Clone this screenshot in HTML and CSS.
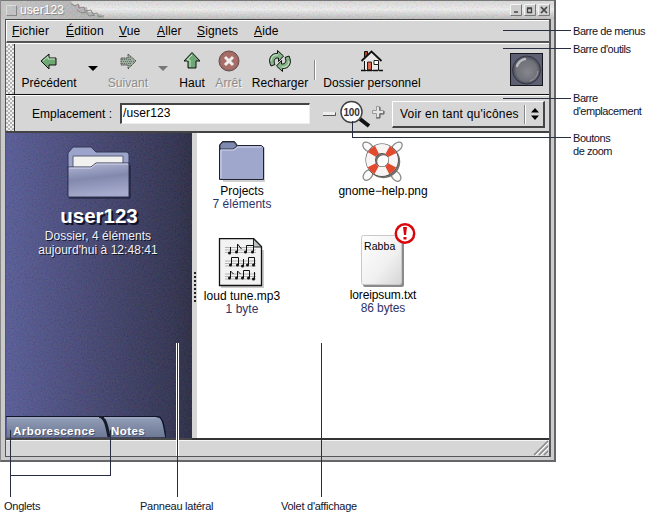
FILE: index.html
```html
<!DOCTYPE html>
<html lang="fr">
<head>
<meta charset="utf-8">
<title>user123</title>
<link rel="stylesheet" href="styles.css">
</head>
<body>
<main class="figure">
  <section class="window">
    <header class="titlebar">
      <svg class="stone" width="556" height="19" aria-hidden="true">
        <defs>
          <filter id="grain" x="0" y="0" width="100%" height="100%"><feTurbulence type="fractalNoise" baseFrequency=".65" numOctaves="2" seed="4"/><feColorMatrix values="1.6 0 0 0 -.2  0 1.6 0 0 -.2  0 0 1.6 0 -.2  0 0 0 0 1"/></filter>
          <linearGradient id="bar" x2="0" y2="1"><stop stop-color="#d8d8d8"/><stop offset=".45" stop-color="#f0f0f0"/><stop offset="1" stop-color="#b2b2b2"/></linearGradient>
          <linearGradient id="barDark" x2="1" y2="0"><stop stop-color="#c4c4c4"/><stop offset="1" stop-color="#acacac"/></linearGradient>
        </defs>
        <rect width="556" height="19" fill="url(#bar)"/>
        <path d="M0 0H70l3 4 5-1 2 4 6-1 1 5 5 0 2 3 6-1 3 3v3H0z" fill="url(#barDark)"/>
        <path d="M70 3l4 2 3-2 1 4 5-1 1 4 6-1 2 4 4-1 2 4 5-1M76 9l5 3 4-1 3 4 6-1" fill="none" stroke="#7c7c7c"/>
        <rect width="556" height="19" filter="url(#grain)" opacity=".17"/>
      </svg>
      <span class="winicon"></span>
      <span class="title">user123</span>
      <span class="winbtns">
        <svg width="12" height="12"><path d="M.5 11.5V.5h11" class="hi"/><path d="M.5 11.5h11V.5" class="lo"/><path d="M4 8h4" stroke="#444" stroke-width="1.5"/></svg>
        <svg width="12" height="12"><path d="M.5 11.5V.5h11" class="hi"/><path d="M.5 11.5h11V.5" class="lo"/><path d="M3.500 4.500v4h4v-4zM3 4h5" fill="none" stroke="#444" stroke-width="1.300"/></svg>
        <svg width="12" height="12"><path d="M.5 11.5V.5h11" class="hi"/><path d="M.5 11.5h11V.5" class="lo"/><path d="M3 3l6 6M9 3L3 9" stroke="#444" stroke-width="1.700"/></svg>
      </span>
    </header>
    <div class="body">
      <nav class="menubar">
        <span class="m1"><u>F</u>ichier</span><span class="m2"><u>É</u>dition</span><span class="m3"><u>V</u>ue</span><span class="m4"><u>A</u>ller</span><span class="m5"><u>S</u>ignets</span><span class="m6"><u>A</u>ide</span>
      </nav>
      <div class="toolbar">
        <span class="grip"></span>
        <div class="tool">
          <svg width="24" height="24"><path d="M4 12l8-7v4h7v7h-7v4z" fill="#6fa777" stroke="#111"/><path d="M6 12l5-4.500V10h7" fill="none" stroke="#c5e8c2"/></svg>
          <span>Précédent</span></div>
        <svg class="drop" width="10" height="6"><path d="M0 0h10L5 5z"/></svg>
        <div class="tool off">
          <svg width="24" height="24"><path d="M20 12l-8-7v4H5v7h7v4z" fill="#9cae9d" stroke="#444" stroke-dasharray="1.500 .7"/><path d="M6 10.500h9M7 12.500h11M6 14.500h9M14 8v9" stroke="#667067" stroke-dasharray="1 1"/></svg>
          <span>Suivant</span></div>
        <svg class="drop" width="10" height="6"><path d="M0 0h10L5 5z" fill="#777"/></svg>
        <div class="tool">
          <svg width="24" height="24"><path d="M12 3.500l8 8.500h-4v7H8v-7H4z" fill="#6fa777" stroke="#111"/><path d="M10 18v-7H7l5-5" fill="none" stroke="#c5e8c2"/></svg>
          <span>Haut</span></div>
        <div class="tool off">
          <svg width="24" height="24"><circle cx="12" cy="12" r="10" fill="#a96d68" stroke="#6c4a48"/><circle cx="12" cy="12" r="9" fill="none" stroke="#6d6260" stroke-dasharray="1 1"/><path d="M8 8l8 8M16 8l-8 8" stroke="#eee" stroke-width="3"/></svg>
          <span>Arrêt</span></div>
        <div class="tool">
          <svg width="24" height="24"><g fill="#86b58a" stroke="#111"><path d="M3 17C-.5 10 3 4 9.500 4.500V1.500l6 5.500-5 5.500V9C6.500 8.500 5 12 7 15.500z"/><path d="M21 7c3.500 7 0 13-6.500 12.500v3L8.500 17l5-5.500V15c4 .5 5.500-3 3.500-6.500z"/></g><path d="M3 12c0-4 3-7 7-6M21 12c0 4-3 7-7 6" fill="none" stroke="#d3edcf"/></svg>
          <span>Recharger</span></div>
        <span class="sep"></span>
        <div class="tool">
          <svg width="24" height="24"><path d="M4.500 11h14v10.500h-14z" fill="#ececec" stroke="#111"/><path d="M4.500 8V2.500h3V6" fill="#b53f2b" stroke="#111"/><path d="M1.500 12L11.500 2.500l10 9.500" fill="#e8e8e8" stroke="#111" stroke-width="1.800"/><path d="M7.500 21v-8h4v8z" fill="#d96850" stroke="#222"/><path d="M14 11.500h4.500v4H14z" fill="#fff" stroke="#222"/><path d="M1 21.500h22" stroke="#111" stroke-width="1.500" stroke-dasharray="5 1"/></svg>
          <span>Dossier personnel</span></div>
        <svg class="throbber" width="33" height="33">
          <defs><radialGradient id="orb" cx=".5" cy=".5" r=".5" fx=".55" fy=".6"><stop stop-color="#85868e"/><stop offset=".75" stop-color="#6f7179"/><stop offset="1" stop-color="#454854"/></radialGradient></defs>
          <rect x=".5" y=".5" width="32" height="32" fill="#5d6073" stroke="#16171c"/><circle cx="16.500" cy="17" r="14" fill="url(#orb)" stroke="#353846"/><path d="M7 13a11 11 0 0 1 8-7" fill="none" stroke="#b9bac0" stroke-width="2.500" stroke-linecap="round"/><path d="M20 28a12 12 0 0 0 8-10" fill="none" stroke="#9899a0"/></svg>
      </div>
      <div class="location">
        <span class="grip"></span>
        <span class="loclabel">Emplacement :</span>
        <span class="field">/user123</span>
        <svg class="zoomer" width="66" height="30">
          <path d="M1 12h12v3.500H1z" fill="#eee"/><path d="M1 15.500h12.500v-3" stroke="#555" fill="none"/>
          <path d="M38 19l9 7" stroke="#111" stroke-width="4"/><circle cx="29.500" cy="12" r="10.500" fill="#fff" stroke="#444" stroke-width="1.500"/><text x="29.500" y="16" text-anchor="middle">100</text>
          <path d="M54.500 6.500h3v4h4v3h-4v4h-3v-4h-4v-3h4z" fill="#e6e6e6" stroke="#999"/><path d="M58 7v3.500M62 11v3h-4v4h-4" fill="none" stroke="#555"/></svg>
        <span class="view"><span>Voir en tant qu'icônes</span><svg width="10" height="14"><path d="M1 5.500h8L5 1zM1 8.500h8L5 13z"/></svg></span>
      </div>
      <div class="content">
        <aside class="sidebar">
          <svg class="dither" width="186" height="307" aria-hidden="true"><rect width="186" height="307" filter="url(#grain)"/></svg>
          <svg class="bigfolder" width="66" height="54">
            <defs><linearGradient id="fold" x2=".2" y2="1"><stop stop-color="#b5b9d8"/><stop offset=".5" stop-color="#8289ad"/><stop offset="1" stop-color="#a6abcd"/></linearGradient></defs>
            <path d="M2 51V8l5-6h18l5 5h31l2 2v42z" fill="#9ca4cb" stroke="#333754"/><path d="M7 11h50v14H7z" fill="#f1f1ef" stroke="#5b5f73"/><path d="M2 22h23l5-4h33v34H2z" fill="url(#fold)" stroke="#303552"/><path d="M3 23h22l5-4h32" fill="none" stroke="#d5d8eb"/><path d="M3 53h61V20" fill="none" stroke="#171a2e"/></svg>
          <h1>user123</h1>
          <p>Dossier, 4 éléments</p><p class="date">aujourd'hui à 12:48:41</p>
          <div class="tabs">
            <svg width="160" height="22" aria-hidden="true"><defs><linearGradient id="tab" x2="0" y2="1"><stop stop-color="#939eb8"/><stop offset="1" stop-color="#6d7995"/></linearGradient></defs>
              <path d="M1 21V1h150c7 0 7 12 9 20z" fill="url(#tab)"/><path d="M0 .5h151c7 0 7 13 9 21" fill="none" stroke="#11152b" stroke-width="1.500"/><path d="M93 0c7 1 8 12 10 21" fill="none" stroke="#171b2b" stroke-width="3"/><path d="M1 1.800h92M98 1.800h52" stroke="#b1bace"/></svg>
            <b class="tab1">Arborescence</b><b class="tab2">Notes</b>
          </div>
        </aside>
        <div class="splitter"></div>
        <div class="files">
          <div class="file">
            <svg width="50" height="42"><path d="M4 5h42l2 2v34H6" fill="#d0cfd1"/><path d="M2.500 38.500V4l3-3.500h12l3 4h24l2 2v32z" fill="#a0a7cd" stroke="#20222d"/><path d="M3 8h13l4-3-3-4H6L3 4z" fill="#7f8ab0" stroke="#303442"/><path d="M4 37V9h13l4-3h23" fill="none" stroke="#d1d5ea"/></svg>
            <span>Projects</span><em>7 éléments</em></div>
          <div class="file help">
            <svg width="50" height="42"><g fill="#fafafa" stroke="#8d8a84" stroke-width="1.300"><ellipse cx="10" cy="6" rx="6" ry="3.800" transform="rotate(40 10 6)"/><ellipse cx="39" cy="6" rx="6" ry="3.800" transform="rotate(-40 39 6)"/><ellipse cx="10" cy="34" rx="6" ry="4" transform="rotate(-50 10 34)"/><ellipse cx="38" cy="35" rx="6" ry="4" transform="rotate(50 38 35)"/></g><circle cx="25.500" cy="20.500" r="11.500" fill="none" stroke="#77716d" stroke-width="10.500"/><circle cx="24" cy="19" r="11.500" fill="none" stroke="#444" stroke-width="10"/><circle cx="24" cy="19" r="11.500" fill="none" stroke="#f6f5f4" stroke-width="9"/><circle cx="24" cy="19" r="11.500" fill="none" stroke="#e14a2e" stroke-width="9" stroke-dasharray="7 11.064" stroke-dashoffset="-5.500"/></svg>
            <span>gnome−help.png</span></div>
          <div class="file">
            <svg width="50" height="50"><path d="M4 49h42V12" fill="none" stroke="#ccc" stroke-width="2"/><path d="M2.500.5h34l8 8v39h-42z" fill="#f2f2f2" stroke="#111" stroke-width="1.300"/><path d="M36.500 1v8h8z" fill="#bcc5bd" stroke="#222"/>
              <g stroke="#999" stroke-width=".7"><path d="M8 9.500h31M8 12h31M8 14.500h31M8 23h31M8 25.500h31M8 28h31M8 36h31M8 38.500h31M8 41h31"/></g>
              <g fill="none" stroke="#111"><path d="M13.500 15V9M20.500 14V6l4 5M29.500 14V7.500h7V14M14.500 27v-7.500h7V27M26.500 28v-7M31.500 27v-7.500h6V27M13.500 40v-7l3 3M20.500 40v-7l3 3M26.500 40v-7.500h6V40M37.500 41v-7"/></g>
              <g fill="#111"><circle cx="12.500" cy="15" r="1.500"/><circle cx="19.500" cy="14" r="1.500"/><circle cx="28.500" cy="14" r="1.500"/><circle cx="35.500" cy="14" r="1.500"/><circle cx="13.500" cy="27" r="1.500"/><circle cx="20.500" cy="27" r="1.500"/><circle cx="25.500" cy="28" r="1.500"/><circle cx="30.500" cy="27" r="1.500"/><circle cx="36.500" cy="27" r="1.500"/><circle cx="12.500" cy="40" r="1.500"/><circle cx="19.500" cy="40" r="1.500"/><circle cx="25.500" cy="40" r="1.500"/><circle cx="31.500" cy="40" r="1.500"/><circle cx="36.500" cy="41" r="1.500"/></g></svg>
            <span>loud tune.mp3</span><em>1 byte</em></div>
          <div class="file doc">
            <svg width="70" height="66"><defs><linearGradient id="paper" x2="1" y2="1"><stop stop-color="#fff"/><stop offset=".6" stop-color="#f0f0f0"/><stop offset="1" stop-color="#d5d5d5"/></linearGradient></defs><rect x="15" y="14" width="41" height="50" rx="2" fill="#8b8b8b"/><rect x="13.500" y="12.500" width="40" height="49" rx="2" fill="url(#paper)" stroke="#c9c9c9"/><text x="16" y="26.500">Rabba</text><circle cx="57" cy="10.500" r="9.200" fill="#fff" stroke="#d9070b" stroke-width="2.500"/><path d="M55 4h4l-1 8h-2zM55.500 14h3v2.500h-3z" fill="#d9070b"/></svg>
            <span>loreipsum.txt</span><em>86 bytes</em></div>
        </div>
      </div>
      <footer class="status"><svg width="16" height="16"><path d="M1 15L15 1M6 15l9-9M11 15l4-4" stroke="#888" stroke-width="1.500"/><path d="M2.500 15.500l13-13M7.500 15.500l8-8" stroke="#fff"/></svg></footer>
    </div>
  </section>
  <aside class="labels">
    <p>Barre de menus</p><p>Barre d'outils</p><p>Barre<br>d'emplacement</p><p>Boutons<br>de zoom</p>
  </aside>
  <div class="captions"><span class="c1">Onglets</span><span class="c2">Panneau latéral</span><span class="c3">Volet d'affichage</span></div>
  <svg class="leaders" width="648" height="522" aria-hidden="true">
    <path d="M176.500 343v113M178.500 343v113" stroke="#fff"/>
    <path d="M503 30.500h68M503 48.500h68M503 98.500h68M352.500 121v17M352 137.500h219M10.500 430v67M110.500 430v46M10 475.500h101M177.500 343v154M321.500 343v154"/>
  </svg>
</main>
</body>
</html>
```
FILE: styles.css
```css
* { box-sizing: border-box; }
body { margin: 0; background: #fff; font: 12px/14px "Liberation Sans", sans-serif; color: #000; }
p, h1 { margin: 0; }
svg { display: block; flex: none; }
.figure { position: relative; width: 648px; height: 522px; display: grid; grid-template-columns: 556px 92px; grid-template-rows: 462px 60px; overflow: hidden; }
.window { display: flex; flex-direction: column; background: #cbcbcb; border-right: 2px solid #66666a; border-bottom: 2px solid #66666a; border-left: 1px solid #888; }
.titlebar { position: relative; height: 19px; flex: none; display: flex; align-items: center; padding: 0 4px 0 5px; border-top: 1px solid #777; }
.stone { position: absolute; left: 0; top: 0; width: 553px; height: 18px; }
.winicon { position: relative; width: 11px; height: 11px; border: 1px solid #888; border-top-color: #ddd; border-left-color: #ddd; }
.title { position: relative; margin-left: 3px; color: #fff; letter-spacing: .1px; text-shadow: 1px 1px #8d8d8d; }
.winbtns { position: relative; margin-left: auto; display: flex; gap: 2px; }
.winbtns svg { background: #cecece; }
.hi { stroke: #f5f5f5; fill: none; }
.lo { stroke: #777; fill: none; }
.body { flex: 1; display: flex; flex-direction: column; margin: 0 3px 3px 4px; border: 1px solid #55585a; border-top-color: #444; border-right-width: 2px; }
.menubar { height: 23px; flex: none; display: flex; padding: 3px 0 0 5px; background: #d6d6d6; border-top: 1px solid #fff; border-bottom: 2px solid #555; border-left: 1px solid #fff; }
.menubar span { letter-spacing: .15px; flex: none; }
.menubar u { text-underline-offset: 1px; }
.m1 { width: 54px; } .m2 { width: 53px; } .m3 { width: 38px; } .m4 { width: 40px; } .m5 { width: 57px; }
.toolbar { height: 52px; flex: none; display: grid; grid-template-columns: 9px 68px 20px 50px 22px 34px 39px 64px 6px 108px 1fr 33px 6px; background: #d6d6d6; border-top: 1px solid #fff; border-bottom: 1px solid #111; }
.grip { width: 9px; border-right: 1px solid #333; background: repeating-conic-gradient(#b4b4b4 0 25%, #f0f0f0 0 50%) 0 0 / 4px 4px; }
.tool { display: flex; flex-direction: column; align-items: center; padding-top: 5px; white-space: nowrap; }
.tool span { margin-top: 3px; letter-spacing: .05px; }
.off span { color: #8c8c8c; text-shadow: 1px 1px #f4f4f4; }
.drop { margin: 22px 0 0 5px; }
.sep { margin: 16px 2px 14px; border-left: 1px solid #888; border-right: 1px solid #fff; width: 2px; }
.throbber { grid-column: 12; margin-top: 9px; }
.location { height: 38px; flex: none; display: flex; background: #d6d6d6; border-top: 1px solid #fff; border-bottom: 2px solid #444; }
.loclabel { margin: 11px 0 0 17px; width: 88px; letter-spacing: 0; white-space: nowrap; }
.field { width: 190px; height: 21px; margin-top: 7px; background: #fff; border: 1px solid #eee; border-top: 2px solid #444; border-left: 2px solid #444; padding: 1px 1px; letter-spacing: .1px; }
.zoomer { margin: 4px 0 0 12px; }
.zoomer text { font-size: 10px; font-weight: bold; fill: #333; letter-spacing: -.2px; }
.view { margin: 5px 0 0 4px; width: 153px; height: 27px; display: flex; align-items: center; padding-left: 7px; border: 1px solid #fff; border-right: 2px solid #444; border-bottom: 2px solid #444; letter-spacing: .2px; white-space: nowrap; }
.view span { width: 125px; line-height: 19px; border-right: 1px solid #888; box-shadow: 1px 0 #fff; }
.view svg { margin-left: 5px; }
.content { flex: 1; display: flex; min-height: 0; }
.sidebar { position: relative; width: 186px; display: flex; flex-direction: column; align-items: center; background: linear-gradient(90deg, #4b5090, #38396a 45%, #222344 90%, #1b1c36); color: #fff; }
.dither { position: absolute; left: 0; top: 0; opacity: .13; }
.bigfolder { position: relative; margin: 12px 0 0 0; }
h1 { position: relative; font-size: 20.5px; line-height: 24px; margin-top: 5px; letter-spacing: 0; text-shadow: 2px 2px #111429; }
.sidebar p { position: relative; padding-right: 2px; font-size: 12px; line-height: 14px; letter-spacing: .05px; color: #f1f1f5; text-shadow: 1px 1px #15172d; }
.sidebar h1 + p { margin-top: 1px; }
.tabs { position: relative; align-self: flex-start; margin-top: auto; display: flex; width: 160px; height: 22px; }
.tabs svg { margin-right: -160px; }
.tabs b { position: relative; font-size: 11.500px; line-height: 14px; padding-top: 8px; letter-spacing: .45px; text-shadow: 1px 1px #4c5670; }
.tab1 { width: 98px; padding-left: 7px; }
.tab2 { padding-left: 7px; }
.splitter { width: 5px; background: repeating-linear-gradient(#222 0 2px, #d6d6d6 2px 4px) 2px 139px / 2px 31px no-repeat, #d6d6d6; }
.files { flex: 1; display: grid; grid-template-columns: 90px 192px; grid-template-rows: 95px auto; background: #fff; align-content: start; }
.file { display: flex; flex-direction: column; align-items: center; padding-top: 8px; white-space: nowrap; line-height: 13px; letter-spacing: .02px; }
.file em { font-style: normal; color: #303368; }
.file svg { margin-bottom: 2px; }
.file:nth-child(3) { padding-top: 10px; }
.help { letter-spacing: -.05px; }
.doc { padding-top: 0; margin-top: -8px; letter-spacing: -.1px; }
.doc svg { margin: 3px 0 0; }
.doc text { font-size: 10.500px; letter-spacing: .1px; }
.status { height: 18px; flex: none; background: #d6d6d6; border-top: 2px solid #333; display: flex; justify-content: flex-end; box-shadow: inset 0 1px #f5f5f5; }
.labels { padding: 25px 0 0 17px; font-size: 11px; line-height: 13px; letter-spacing: -.45px; white-space: nowrap; color: #11142b; }
.labels p + p { margin-top: 5px; }
.labels p:nth-child(3) { margin-top: 36px; }
.labels p:nth-child(4) { margin-top: 14px; }
.captions { grid-column: 1 / 3; display: flex; padding: 37px 0 0 4px; font-size: 11px; line-height: 14px; letter-spacing: -.25px; color: #11142b; }
.c1 { width: 136px; } .c2 { width: 141px; }
.leaders { position: absolute; inset: 0; fill: none; stroke: #292d42; stroke-width: 1; pointer-events: none; }
```
